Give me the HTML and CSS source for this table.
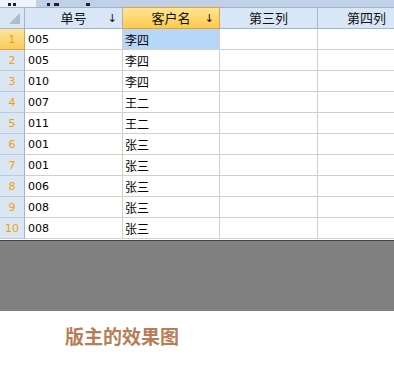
FILE: index.html
```html
<!DOCTYPE html>
<html>
<head>
<meta charset="utf-8">
<link rel="stylesheet" href="styles.css">
</head>
<body>
<div class="page">
  <div class="tabs">
    <div class="tab active"><span class="frag f1"></span><span class="frag f2"></span></div>
    <div class="tab"><span class="frag f3"></span><span class="frag f4"></span><span class="frag f5"></span></div>
  </div>
  <div class="grid">
    <div class="row head">
      <div class="rn corner"><span class="tri"></span></div>
      <div class="hc"><span class="ht">单号</span><span class="arrow">↓</span></div>
      <div class="hc sel"><span class="ht">客户名</span><span class="arrow">↓</span></div>
      <div class="hc"><span class="ht">第三列</span></div>
      <div class="hc"><span class="ht">第四列</span></div>
    </div>
    <div class="row"><div class="rn cur">1</div><div class="c num">005</div><div class="c zh act">李四</div><div class="c"></div><div class="c"></div></div>
    <div class="row"><div class="rn">2</div><div class="c num">005</div><div class="c zh">李四</div><div class="c"></div><div class="c"></div></div>
    <div class="row"><div class="rn">3</div><div class="c num">010</div><div class="c zh">李四</div><div class="c"></div><div class="c"></div></div>
    <div class="row"><div class="rn">4</div><div class="c num">007</div><div class="c zh">王二</div><div class="c"></div><div class="c"></div></div>
    <div class="row"><div class="rn">5</div><div class="c num">011</div><div class="c zh">王二</div><div class="c"></div><div class="c"></div></div>
    <div class="row"><div class="rn">6</div><div class="c num">001</div><div class="c zh">张三</div><div class="c"></div><div class="c"></div></div>
    <div class="row"><div class="rn">7</div><div class="c num">001</div><div class="c zh">张三</div><div class="c"></div><div class="c"></div></div>
    <div class="row"><div class="rn">8</div><div class="c num">006</div><div class="c zh">张三</div><div class="c"></div><div class="c"></div></div>
    <div class="row"><div class="rn">9</div><div class="c num">008</div><div class="c zh">张三</div><div class="c"></div><div class="c"></div></div>
    <div class="row"><div class="rn">10</div><div class="c num">008</div><div class="c zh">张三</div><div class="c"></div><div class="c"></div></div>
  </div>
  <div class="gray"></div>
  <div class="caption">版主的效果图</div>
</div>
</body>
</html>
```
FILE: styles.css
```css
html, body {
  margin: 0;
  padding: 0;
  background: #ffffff;
}
.page {
  width: 394px;
  height: 375px;
  overflow: hidden;
  font-family: "Noto Sans CJK SC", "DejaVu Sans", sans-serif;
}
.tabs {
  height: 7px;
  background: #bfd0e7;
  display: flex;
  overflow: hidden;
}
.tab {
  position: relative;
  height: 7px;
}
.tab.active {
  width: 36px;
  background: #eef3fa;
}
.tab:not(.active) {
  width: 80px;
}
.frag {
  position: absolute;
  bottom: 1px;
  height: 3px;
  background: #222;
}
.f1 { left: 8px; width: 3px; }
.f2 { left: 13px; width: 3px; }
.f3 { left: 11px; width: 3px; }
.f4 { left: 18px; width: 5px; }
.f5 { left: 50px; width: 4px; }
.grid {
  display: flex;
  flex-direction: column;
}
.row {
  display: flex;
  height: 21px;
}
.row > div {
  flex: none;
  box-sizing: border-box;
  height: 21px;
}
.rn {
  width: 25px;
  background: #dae6f4;
  border-right: 1px solid #9db5cf;
  border-bottom: 1px solid #b9cbe0;
  color: #f4a000;
  font-family: "DejaVu Sans", sans-serif;
  font-size: 11px;
  display: flex;
  align-items: center;
  justify-content: center;
}
.rn.cur {
  background: linear-gradient(#fde49a, #f9cd5c);
  border-right: 1px solid #e0a43c;
  border-bottom: 1px solid #e0a43c;
}
.corner {
  position: relative;
}
.tri {
  position: absolute;
  right: 4px;
  bottom: 4px;
  width: 0;
  height: 0;
  border-left: 11px solid transparent;
  border-bottom: 11px solid #aebccc;
}
.head {
  height: 22px;
}
.head > div {
  height: 22px;
  border-top: 1px solid #9db5cf;
}
.head .rn {
  border-bottom: 1px solid #9db5cf;
}
.hc {
  width: 98px;
  position: relative;
  background: #d9e6f5;
  border-right: 1px solid #9db5cf;
  border-bottom: 1px solid #9db5cf;
  display: flex;
  align-items: center;
  justify-content: center;
  font-size: 13px;
  color: #111;
}
.hc.sel {
  width: 97px;
  background: linear-gradient(#ffe690, #fcc94d);
  border-right: 1px solid #e0a43c;
  border-bottom: 1px solid #e0a43c;
  border-top: 1px solid #e0a43c;
}
.ht {
  line-height: 20px;
}
.arrow {
  position: absolute;
  right: 5px;
  top: 2px;
  font-family: "DejaVu Sans", sans-serif;
  font-size: 11px;
  line-height: 18px;
}
.c {
  width: 98px;
  background: #ffffff;
  border-right: 1px solid #d4d0c8;
  border-bottom: 1px solid #d4d0c8;
  display: flex;
  align-items: center;
  padding-left: 3px;
  color: #000;
}
.row > .c:nth-child(3) {
  width: 97px;
}
.num {
  font-family: "DejaVu Sans", sans-serif;
  font-size: 11px;
}
.zh {
  font-size: 12px;
  padding-left: 2px;
}
.act {
  background: #b7d7f8;
}
.gray {
  height: 70px;
  background: #808080;
  border-top: 1px solid #444;
  margin-top: 1px;
}
.caption {
  padding-left: 65px;
  padding-top: 12px;
  font-size: 19px;
  font-weight: bold;
  color: #b87c57;
  line-height: 25px;
}
```
